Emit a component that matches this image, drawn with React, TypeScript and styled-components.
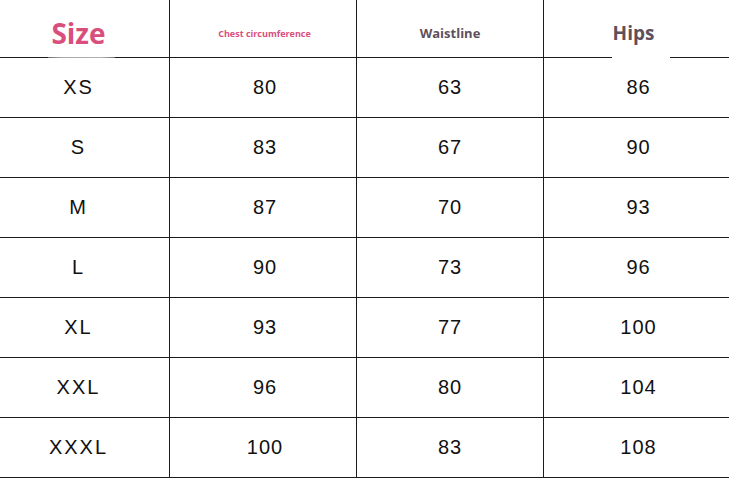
import React from "react";
import styled, { createGlobalStyle } from "styled-components";

const Global = createGlobalStyle`
  html, body { margin: 0; padding: 0; background: #fff; }
  body { width: 729px; height: 481px; overflow: hidden; }
`;

const Table = styled.div`
  display: grid;
  grid-template-columns: 170px 187px 187px 185px;
  grid-auto-rows: 60px;
  grid-template-rows: 58px;
  width: 729px;
  font-family: "Liberation Sans", Arial, sans-serif;
`;

const Cell = styled.div<{ $last?: boolean; $first?: boolean; $nudge?: number }>`
  position: relative;
  display: flex;
  align-items: center;
  justify-content: center;
  box-sizing: border-box;
  border-bottom: 1px solid #1c1c1c;
  border-right: ${(p) => (p.$last ? "none" : "1px solid #1c1c1c")};
  padding-right: ${(p) => (p.$first ? "12px" : "0")};
  padding-left: ${(p) => p.$nudge ?? 0}px;
  padding-top: 0;
  font-size: 20px;
  color: #111;
  letter-spacing: ${(p) => (p.$first ? "2px" : "1px")};
`;

const HeadCell = styled(Cell)<{ $mask?: "size" | "hips" }>`
  padding-top: 9px;
  padding-left: 0;
  letter-spacing: 0;
  font-family: "Open Sans", "Noto Sans", sans-serif;
  font-weight: 700;
  &::after {
    content: "";
    position: absolute;
    bottom: -1px;
    display: ${(p) => (p.$mask ? "block" : "none")};
    left: ${(p) => (p.$mask === "hips" ? "68px" : "48px")};
    width: ${(p) => (p.$mask === "hips" ? "58px" : "67px")};
    height: 1px;
    background: ${(p) =>
      p.$mask === "hips"
        ? "#fff"
        : "linear-gradient(90deg, #6a6a6a, #a8a8a8 20%, #b0b0b0 80%, #6a6a6a)"};
  }
`;

const Label = styled.span<{ $size: number; $color: string; $shift?: number }>`
  font-size: ${(p) => p.$size}px;
  color: ${(p) => p.$color};
  line-height: 1;
  margin-left: ${(p) => p.$shift ?? 0}px;
`;

const PINK = "#d84f7d";
const GRAY = "#5d505c";

const rows: [string, number, number, number][] = [
  ["XS", 80, 63, 86],
  ["S", 83, 67, 90],
  ["M", 87, 70, 93],
  ["L", 90, 73, 96],
  ["XL", 93, 77, 100],
  ["XXL", 96, 80, 104],
  ["XXXL", 100, 83, 108],
];

export default function App() {
  return (
    <>
      <Global />
      <Table>
        <HeadCell $first $mask="size">
          <Label $size={28} $color={PINK}>Size</Label>
        </HeadCell>
        <HeadCell>
          <Label $size={9} $color={PINK} $shift={3}>Chest circumference</Label>
        </HeadCell>
        <HeadCell>
          <Label $size={13} $color={GRAY}>Waistline</Label>
        </HeadCell>
        <HeadCell $last $mask="hips">
          <Label $size={19} $color={GRAY} $shift={-6}>Hips</Label>
        </HeadCell>
        {rows.map(([s, c, w, h]) => (
          <React.Fragment key={s}>
            <Cell $first>{s}</Cell>
            <Cell $nudge={4}>{c}</Cell>
            <Cell>{w}</Cell>
            <Cell $last $nudge={4}>{h}</Cell>
          </React.Fragment>
        ))}
      </Table>
    </>
  );
}
